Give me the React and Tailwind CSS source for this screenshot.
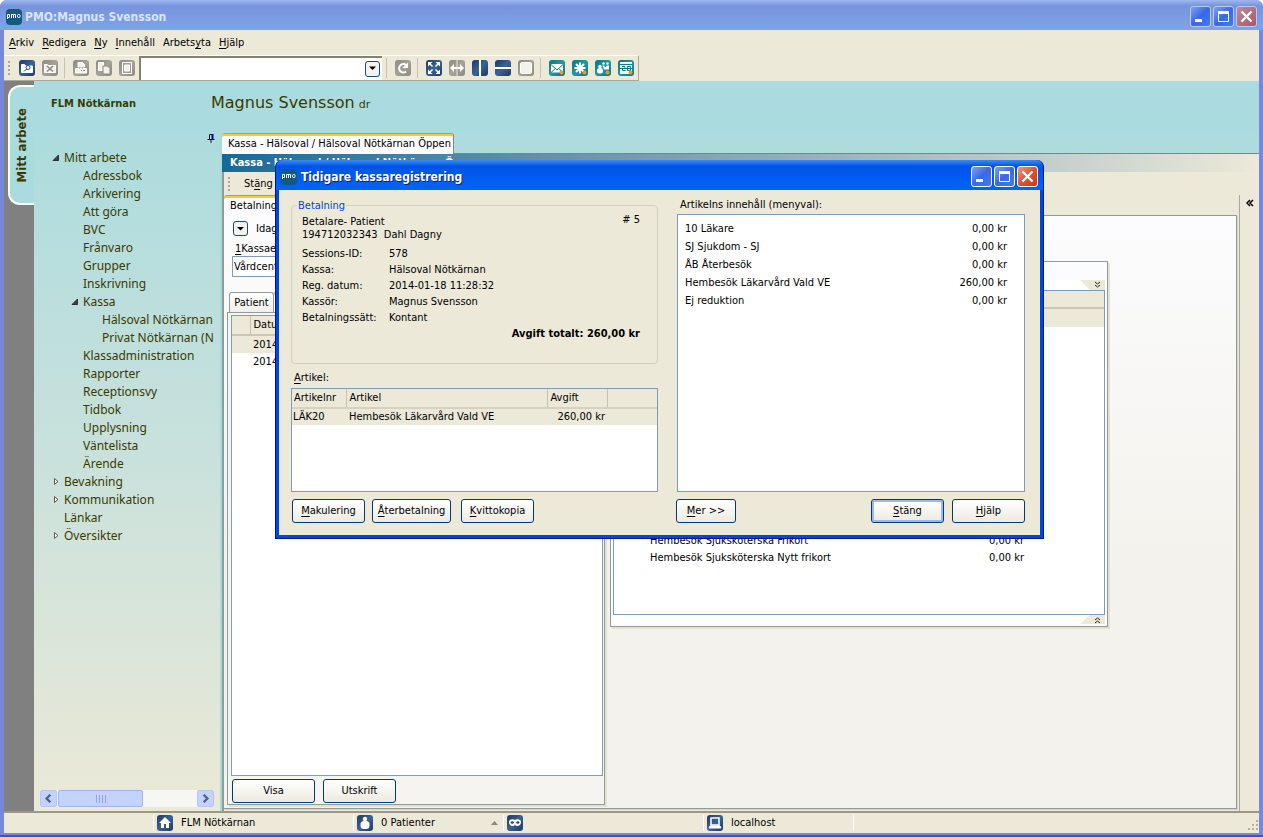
import React from 'react';
import clsx from 'clsx';

const menuItems = [
    ['', 'A', 'rkiv'],
    ['', 'R', 'edigera'],
    ['', 'N', 'y'],
    ['', 'I', 'nnehåll'],
    ['Arbets', 'y', 'ta'],
    ['', 'H', 'jälp']
];

const treeItems = [
    { label: 'Mitt arbete', level: 0, state: 'open' },
    { label: 'Adressbok', level: 1 },
    { label: 'Arkivering', level: 1 },
    { label: 'Att göra', level: 1 },
    { label: 'BVC', level: 1 },
    { label: 'Frånvaro', level: 1 },
    { label: 'Grupper', level: 1 },
    { label: 'Inskrivning', level: 1 },
    { label: 'Kassa', level: 1, state: 'open' },
    { label: 'Hälsoval Nötkärnan', level: 2 },
    { label: 'Privat Nötkärnan (N', level: 2 },
    { label: 'Klassadministration', level: 1 },
    { label: 'Rapporter', level: 1 },
    { label: 'Receptionsvy', level: 1 },
    { label: 'Tidbok', level: 1 },
    { label: 'Upplysning', level: 1 },
    { label: 'Väntelista', level: 1 },
    { label: 'Ärende', level: 1 },
    { label: 'Bevakning', level: 0, state: 'closed' },
    { label: 'Kommunikation', level: 0, state: 'closed' },
    { label: 'Länkar', level: 0 },
    { label: 'Översikter', level: 0, state: 'closed' }
];

const paymentDetails = [
    ['Sessions-ID:', '578'],
    ['Kassa:', 'Hälsoval Nötkärnan'],
    ['Reg. datum:', '2014-01-18 11:28:32'],
    ['Kassör:', 'Magnus Svensson'],
    ['Betalningssätt:', 'Kontant']
];

const articleContents = [
    ['10 Läkare', '0,00 kr'],
    ['SJ Sjukdom - SJ', '0,00 kr'],
    ['ÅB Återbesök', '0,00 kr'],
    ['Hembesök Läkarvård Vald VE', '260,00 kr'],
    ['Ej reduktion', '0,00 kr']
];

const tileColors = {
    navy: 'from-[#1f3864] via-[#3a6496] to-[#1f3864]',
    gray: 'from-[#8c8a80] via-[#a5a399] to-[#8c8a80]',
    teal: 'from-[#0c7480] via-[#1f9aa0] to-[#0c7480]'
};

const Tile = ({ color = 'navy', children }) => (
    <span className={clsx('block size-4 shrink-0 rounded-[3px] bg-linear-to-br', tileColors[color])}>
        <svg viewBox="0 0 16 16" width="16" height="16" fill="none" stroke="#fff" aria-hidden="true">
            {children}
        </svg>
    </span>
);

const ToolButton = ({ label, color, children }) => (
    <button type="button" aria-label={label} className="block pr-1 pl-[3px]">
        <Tile color={color}>{children}</Tile>
    </button>
);

const Separator = () => <span className="mr-[5px] ml-[2px] h-5 w-px bg-[#c5c2b2]" />;

const Grip = () => (
    <svg width="3" height="16" viewBox="0 0 3 16" fill="#a8a694" aria-hidden="true">
        <path d="M0 1h2v2H0zM0 5h2v2H0zM0 9h2v2H0zM0 13h2v2H0z" />
    </svg>
);

const Key = ({ children }) => <span className="underline underline-offset-2">{children}</span>;

const PmoLogo = () => (
    <svg width="16" height="16" viewBox="0 0 16 16" className="shrink-0" aria-hidden="true">
        <rect width="16" height="16" rx="4" fill="#145a80" />
        <g fill="none" stroke="#fff">
            <path d="M1.500 10V5.500h2v3h-2M5.500 9V5.500h4V9M7.500 5.500V9" />
            <rect x="11.500" y="5.500" width="2.500" height="3" rx="1" />
        </g>
    </svg>
);

const CaptionButton = ({ kind, dim }) => (
    <button
        type="button"
        aria-label={kind}
        className={clsx(
            'flex size-[21px] items-center justify-center rounded-[3px] border bg-linear-to-br',
            dim ? 'border-[#b9c8f4]' : 'border-white',
            kind !== 'Stäng fönster' && 'from-[#7f9ff2] via-[#3a68e4] to-[#3f7cf0]',
            kind === 'Stäng fönster' && (dim ? 'from-[#c08a96] to-[#a4586c]' : 'from-[#f0977c] via-[#e2502c] to-[#c83c12]')
        )}
    >
        <svg width="19" height="19" viewBox="0 0 19 19" fill="none" stroke="#fff" aria-hidden="true">
            {kind === 'Minimera' && <path d="M4 13.500h7" strokeWidth="3" />}
            {kind === 'Maximera' && (
                <>
                    <path d="M4 5.500h11" strokeWidth="3" />
                    <path d="M4.500 6v8.500h10V6" />
                </>
            )}
            {kind === 'Stäng fönster' && <path d="M4.500 4.500l10 10M14.500 4.500l-10 10" strokeWidth="2.400" />}
        </svg>
    </button>
);

const CaptionButtons = ({ dim }) => (
    <div className="ml-auto flex gap-[2px]">
        <CaptionButton kind="Minimera" dim={dim} />
        <CaptionButton kind="Maximera" dim={dim} />
        <CaptionButton kind="Stäng fönster" dim={dim} />
    </div>
);

const XpButton = ({ className, active, children }) => (
    <button
        type="button"
        className={clsx(
            'h-6 rounded-[3px] border border-[#003c74] bg-linear-to-b from-white to-[#eceae0]',
            active && 'shadow-[inset_0_0_0_2px_#9cb8ee]',
            className
        )}
    >
        {children}
    </button>
);

const DropGlyph = () => (
    <svg width="15" height="15" viewBox="0 0 15 15" className="shrink-0" aria-hidden="true">
        <rect x="0.500" y="0.500" width="14" height="14" rx="2.500" fill="#f4f3ee" stroke="#1c4a7c" />
        <path d="M4 6h7L7.500 9.500z" fill="#000" />
    </svg>
);

const TreeArrow = ({ state }) => (
    <svg width="8" height="8" viewBox="0 0 8 8" className="shrink-0" aria-hidden="true">
        {state === 'open' && <path d="M6.500 1v5.500H1z" fill="#404040" stroke="#303030" />}
        {state === 'closed' && <path d="M2.500 0.500v6l3.500-3z" fill="#fff" stroke="#606050" />}
    </svg>
);

const MainToolbar = () => (
    <div className="flex h-[26px] w-fit items-center border-t border-r border-b border-t-white border-r-[#aca899] border-b-[#aca899] pl-1">
        <Grip />
        <span className="w-[5px]" />
        <ToolButton label="Sök patient">
            <path d="M2.500 12.500v-8h3l1 1.500h7v6.500z" fill="#fff" />
            <circle cx="9" cy="7.500" r="2" stroke="#24467c" />
            <path d="M7.500 9l-2.500 2.500" stroke="#24467c" />
        </ToolButton>
        <ToolButton label="Stäng patient" color="gray">
            <path d="M2.500 12.500v-8h3l1 1h7v7z" fill="#f2f1ec" />
            <path d="M5 6l6 5.500M11 6l-6 5.500" stroke="#8c8a80" strokeWidth="1.500" />
        </ToolButton>
        <Separator />
        <ToolButton label="Skriv ut" color="gray">
            <path d="M5 7V2.500h4.500l2 2V7z" fill="#f2f1ec" />
            <path d="M2.500 8.500h11v4.500h-11z" fill="#f2f1ec" />
            <path d="M6 8h1M9 8h1M8 10.500h1M10 10.500h2" stroke="#8c8a80" />
        </ToolButton>
        <ToolButton label="Kopiera" color="gray">
            <path d="M2.500 2.500h5v8h-5z" fill="#f2f1ec" />
            <path d="M7 6h4.500l2.500 2.500v5.500H7z" fill="#f2f1ec" stroke="#8c8a80" />
        </ToolButton>
        <ToolButton label="Dokument" color="gray">
            <path d="M3.500 2.500h9v11h-9z" />
            <path d="M5.500 5h5v6h-5z" fill="#f2f1ec" />
        </ToolButton>
        <label className="mr-[2px] flex h-6 w-[243px] items-center border-t-2 border-l-2 border-[#85836f] bg-white pr-[2px]">
            <input type="text" aria-label="Patient" className="min-w-0 flex-1 bg-transparent px-1 outline-none" />
            <svg width="15" height="16" viewBox="0 0 15 16" aria-hidden="true">
                <rect x="0.500" y="0.500" width="14" height="15" rx="2.500" fill="#f4f3ee" stroke="#1c4a7c" />
                <path d="M4 5.500h7L7.500 9z" fill="#000" />
            </svg>
        </label>
        <Separator />
        <ToolButton label="Uppdatera" color="gray">
            <path d="M11 11.500A4.200 4.200 0 1 1 11 5" strokeWidth="2" />
            <path d="M13 2.500v5.500H7.500z" fill="#fff" stroke="none" />
        </ToolButton>
        <Separator />
        <ToolButton label="Helskärm">
            <path d="M3 3l3.500 3.500M13 3L9.500 6.500M3 13l3.500-3.500M13 13L9.500 9.500" strokeWidth="1.500" />
            <path d="M2 6.500V2h4.500zM9.500 2H14v4.500zM14 9.500V14H9.500zM6.500 14H2V9.500z" fill="#fff" stroke="none" />
        </ToolButton>
        <ToolButton label="Bredd" color="gray">
            <path d="M3 8h10" strokeWidth="2" />
            <path d="M1 8l4-4v8zM15 8l-4-4v8z" fill="#fff" stroke="none" />
            <path d="M8 0v16" stroke="#ece9d8" />
        </ToolButton>
        <ToolButton label="Dela lodrätt">
            <path d="M8 0v16" strokeWidth="2" />
        </ToolButton>
        <ToolButton label="Dela vågrätt">
            <path d="M0 8h16" strokeWidth="2" />
        </ToolButton>
        <ToolButton label="En ruta" color="gray">
            <rect x="2.500" y="2.500" width="11" height="11" rx="1.500" fill="#f2f1ec" />
        </ToolButton>
        <Separator />
        <ToolButton label="Nytt meddelande" color="teal">
            <path d="M2 4h12v8.500H2z" fill="#fff" stroke="none" />
            <path d="M2 4.500L8 10l6-5.500M2 12.500L6.500 8.500M14 12.500L9.500 8.500" stroke="#128088" />
            <circle cx="12.500" cy="12.500" r="2" fill="#f7941d" stroke="none" />
        </ToolButton>
        <ToolButton label="Ny händelse" color="teal">
            <path d="M8 2.500v11M2.500 8h11M4 4l8 8M12 4l-8 8" strokeWidth="2" />
            <circle cx="12.500" cy="12.500" r="2" fill="#f7941d" stroke="none" />
        </ToolButton>
        <ToolButton label="Ny grupp" color="teal">
            <g fill="#fff" stroke="none">
                <circle cx="5" cy="6.500" r="1.800" />
                <rect x="2" y="8" width="6" height="5.500" rx="2.500" />
                <circle cx="8.500" cy="3.500" r="1.200" />
                <circle cx="12.500" cy="3.500" r="1.200" />
                <path d="M7.500 5.500l1.500 0 1.500 2 1.500-2h2v4H9z" />
            </g>
            <circle cx="12.500" cy="12.500" r="2" fill="#f7941d" stroke="none" />
        </ToolButton>
        <ToolButton label="Ny bokning" color="teal">
            <path d="M2.500 2.500h11v11h-11z" fill="#fff" />
            <path d="M2 4.500h12M4 6.500h3v2H4.500v2h3M9.500 6.500h3v4h-3zM2 8.500h12" stroke="#128088" />
            <circle cx="12.500" cy="12.500" r="2" fill="#f7941d" stroke="none" />
        </ToolButton>
    </div>
);

const Sidebar = () => (
    <nav className="flex w-[188px] shrink-0 flex-col border-r-2 border-[#a8dadb]">
        <div className="flex h-4 justify-end pr-[5px]">
            <svg width="8" height="10" viewBox="0 0 8 10" fill="none" stroke="#101030" aria-hidden="true">
                <path d="M2.500 6V1.500h3V6M0.500 6.500h7M4 6.500V10" />
                <path d="M5.500 1v5" stroke="#00008c" strokeWidth="2" />
            </svg>
        </div>
        <ul className="mr-[5px] overflow-hidden font-['Noto_Sans',sans-serif] text-[12px] leading-[18px] text-[#3a3a00]">
            {treeItems.map((item) => (
                <li key={item.label}>
                    <a
                        href="#"
                        className={clsx(
                            'flex h-[18px] items-center gap-1 whitespace-nowrap',
                            item.level === 0 && 'pl-[18px]',
                            item.level === 1 && 'pl-[37px]',
                            item.level === 2 && 'pl-[56px]'
                        )}
                    >
                        <TreeArrow state={item.state} />
                        {item.label}
                    </a>
                </li>
            ))}
        </ul>
        <div className="mt-auto mr-[6px] mb-1 ml-[6px] flex h-[17px] gap-px bg-[#f6f6f2]">
            <ScrollButton label="Rulla åt vänster" d="M10 4L6 8l4 4" />
            <div className="flex w-[85px] items-center justify-center gap-[2px] rounded-[2px] border border-[#9db5ec] bg-[#c3d3fd]">
                {[0, 1, 2, 3].map((n) => (
                    <span key={n} className="h-2 w-px bg-[#8ca6ea]" />
                ))}
            </div>
            <span className="flex-1" />
            <ScrollButton label="Rulla åt höger" d="M6 4l4 4-4 4" />
        </div>
    </nav>
);

const ScrollButton = ({ label, d }) => (
    <button type="button" aria-label={label} className="w-[17px] rounded-[2px] border border-[#b4c6f4] bg-[#c3d3fd]">
        <svg width="15" height="15" viewBox="0 0 16 16" fill="none" stroke="#4d6185" strokeWidth="2.500" aria-hidden="true">
            <path d={d} />
        </svg>
    </button>
);

const HistoryPanel = () => (
    <section className="flex w-[381px] shrink-0 flex-col pt-[6px] pb-[3px] pl-[3px]">
        <div className="flex h-[15px] items-center gap-2 pl-[6px]">
            <button type="button" aria-label="Välj period">
                <DropGlyph />
            </button>
            <span>Idag</span>
        </div>
        <label htmlFor="unit" className="mt-[6px] pl-2 leading-[14px]">
            <Key>1</Key>Kassaenhet
        </label>
        <select id="unit" className="ml-[5px] h-[21px] w-[200px] appearance-none border border-[#7f9db9] bg-white px-px">
            <option>Vårdcentral</option>
        </select>
        <div className="mt-[14px] flex h-[21px] items-end pl-[2px]">
            <button type="button" className="h-5 w-[45px] rounded-t-[3px] border border-b-0 border-[#919b9c] bg-linear-to-b from-white to-[#f0efe8]">
                Patient
            </button>
            <button
                type="button"
                aria-label="Alla"
                className="h-[21px] w-[60px] rounded-t-[3px] border-t border-r border-t-[#e68b2c] border-r-[#919b9c] bg-white shadow-[inset_0_2px_#ffc73c]"
            />
        </div>
        <div className="flex flex-1 flex-col border border-[#919b9c] bg-[#f5f4f0] pt-[2px] pr-px pb-px pl-[3px] shadow-[2px_2px_0_#e4e1d2]">
            <div className="flex-1 border border-[#7f9db9] bg-white">
                <table className="w-full border-collapse text-left">
                    <thead>
                        <tr className="h-[19px] border-b-2 border-[#cbc7b8] bg-[#ece9d8]">
                            <th className="w-[18px] p-0" />
                            <th className="border-l border-[#c5c2b2] p-0 pl-[3px] font-normal">Datum</th>
                        </tr>
                    </thead>
                    <tbody>
                        <tr className="h-[18px] bg-[#ece9d8]">
                            <td className="p-0" />
                            <td className="p-0 pl-[3px]">2014-01-18</td>
                        </tr>
                        <tr className="h-[18px]">
                            <td className="p-0" />
                            <td className="p-0 pl-[3px]">2014-01-18</td>
                        </tr>
                    </tbody>
                </table>
            </div>
            <div className="flex gap-2 pt-[3px] pl-px">
                <XpButton className="w-[83px]">Visa</XpButton>
                <XpButton className="w-[73px]">Utskrift</XpButton>
            </div>
        </div>
    </section>
);

const ArticlePanel = () => (
    <section className="mt-[45px] ml-[5px] flex h-[366px] w-[498px] shrink-0 flex-col border border-[#919b9c] bg-[#fcfcfe] p-[2px] shadow-[2px_2px_0_#e4e1d2]">
        <div className="mt-4 flex h-[10px] justify-end bg-white">
            <Fold d="M9 1l2.500 2L14 1M9 4l2.500 2L14 4" />
        </div>
        <div className="flex flex-1 flex-col border border-[#7f9db9] bg-white">
            <div className="h-[18px] border-b-2 border-[#cbc7b8] bg-[#ece9d8]" />
            <div className="h-[18px] bg-[#ece9d8]" />
            <table className="mt-auto mb-12 w-full">
                <tbody>
                    <tr className="h-[17px]">
                        <td className="p-0 pl-9">Hembesök Sjuksköterska Frikort</td>
                        <td className="p-0 pr-20 text-right">0,00 kr</td>
                    </tr>
                    <tr className="h-[17px]">
                        <td className="p-0 pl-9">Hembesök Sjuksköterska Nytt frikort</td>
                        <td className="p-0 pr-20 text-right">0,00 kr</td>
                    </tr>
                </tbody>
            </table>
        </div>
        <div className="flex h-[9px] justify-end bg-white">
            <Fold d="M9 4l2.500-2L14 4M9 7l2.500-2L14 7" up />
        </div>
    </section>
);

const Fold = ({ d, up }) => (
    <svg width="25" height="10" viewBox="0 0 25 10" aria-hidden="true">
        <path d={up ? 'M10 0h15v9H0z' : 'M0 0h25v10H10z'} fill="#ece9d8" />
        <path d={d} transform="translate(6 1)" fill="none" stroke="#202020" />
    </svg>
);

const Workspace = () => (
    <main className="flex min-w-0 flex-1 flex-col">
        <div className="flex h-[21px]">
            <button
                type="button"
                className="w-[232px] rounded-t-[3px] border-t border-r border-t-[#e68b2c] border-r-[#8a8a80] bg-[#fcfcfe] pl-[6px] text-left whitespace-nowrap shadow-[inset_0_2px_#ffc73c]"
            >
                Kassa - Hälsoval / Hälsoval Nötkärnan Öppen
            </button>
            <span className="flex-1 border-b border-[#7c8684]" />
        </div>
        <h2 className="h-[18px] truncate bg-linear-to-r from-[#156a98] to-[#ece9d8] pl-2 font-bold leading-[18px] text-white">
            Kassa - Hälsoval / Hälsoval Nötkärnan Öppen
        </h2>
        <div className="flex flex-1 flex-col border-l-2 border-l-[#919b9c] bg-[#ece9d8]">
            <div className="flex h-[23px] items-center gap-[13px] pl-1">
                <Grip />
                <button type="button">
                    St<Key>ä</Key>ng
                </button>
            </div>
            <div className="flex flex-1">
                <div className="flex flex-1 flex-col pb-[2px]">
                    <button
                        type="button"
                        className="h-5 w-[60px] rounded-t-[3px] border-t border-[#e68b2c] bg-[#fcfcfe] pl-[6px] text-left shadow-[inset_0_2px_#ffc73c]"
                    >
                        Betalning
                    </button>
                    <div className="flex flex-1 border-r border-b border-[#919b9c] bg-linear-to-b from-[#fcfcfe] to-[#f3f2ec] to-60% shadow-[1px_1px_0_#d8d5c6]">
                        <HistoryPanel />
                        <div className="flex-1 border-t border-[#919b9c]">
                            <ArticlePanel />
                        </div>
                    </div>
                </div>
                <div className="ml-[2px] w-5 border-l border-[#aca899] pt-1 pl-[6px]">
                    <button type="button" aria-label="Visa sidopanel" className="block">
                        <svg width="8" height="8" viewBox="0 0 8 8" fill="none" stroke="#000" strokeWidth="1.500" aria-hidden="true">
                            <path d="M4 1L1 4l3 3M7 1L4 4l3 3" />
                        </svg>
                    </button>
                </div>
            </div>
        </div>
    </main>
);

const StatusBar = () => (
    <footer className="flex h-[22px] shrink-0 items-center border-t-2 border-[#9b9885] bg-[#ece9d8]">
        <span className="w-[149px]" />
        <div className="flex w-[200px] items-center gap-2 border-l border-white pl-[3px]">
            <Tile>
                <path d="M8 2L2 8h2v5h3V9h2v4h3V8h2z" fill="#fff" stroke="none" />
            </Tile>
            FLM Nötkärnan
        </div>
        <div className="flex w-[150px] items-center gap-2 border-l border-white pl-[3px]">
            <Tile>
                <circle cx="8" cy="4" r="2.200" fill="#fff" stroke="none" />
                <rect x="3.500" y="6" width="9" height="8" rx="3.500" fill="#fff" stroke="none" />
            </Tile>
            0 Patienter
            <svg width="7" height="4" viewBox="0 0 7 4" className="mr-[5px] ml-auto" aria-hidden="true">
                <path d="M3.500 0L7 4H0z" fill="#8a8774" />
            </svg>
        </div>
        <div className="flex w-[200px] items-center border-l border-white pl-[3px]">
            <Tile>
                <path d="M2 7c0-3 4-3.500 6-2 2-1.500 6-1 6 2 0 4-4.500 5.500-6 2.500C6.500 12.500 2 11 2 7z" fill="#fff" stroke="none" />
                <ellipse cx="5.200" cy="7.500" rx="1.600" ry="1.300" fill="#24467c" stroke="none" />
                <ellipse cx="10.800" cy="7.500" rx="1.600" ry="1.300" fill="#24467c" stroke="none" />
            </Tile>
        </div>
        <div className="flex w-[150px] items-center gap-2 border-l border-white pl-[3px]">
            <Tile>
                <path d="M4 3h8v7H4z" strokeWidth="1.500" />
                <path d="M3 11h10l1 2H2z" fill="#fff" />
            </Tile>
            localhost
        </div>
        <div className="flex h-4 flex-1 items-end justify-end border-l border-white">
            <svg width="11" height="11" viewBox="0 0 11 11" fill="#b4b19e" aria-hidden="true">
                <path d="M8 0h2v2H8zM4 4h2v2H4zM8 4h2v2H8zM0 8h2v2H0zM4 8h2v2H4zM8 8h2v2H8z" />
            </svg>
        </div>
    </footer>
);

const RegistrationDialog = () => (
    <div
        role="dialog"
        aria-labelledby="dialog-title"
        className="absolute top-[160px] left-[275px] w-[769px] rounded-t-[7px] border-r border-b border-l border-[#00138c] bg-[#0046e0] px-[3px] pb-[3px]"
    >
        <header className="-mx-[3px] flex h-[30px] items-center gap-1 rounded-t-[7px] bg-linear-to-b from-[#3c8cf4] via-[#0054e6] via-20% to-[#0064fa] pt-[3px] pr-[5px] pl-[5px]">
            <PmoLogo />
            <h2 id="dialog-title" className="text-[12px] font-bold text-white [text-shadow:1px_1px_#0a1e78]">
                Tidigare kassaregistrering
            </h2>
            <CaptionButtons />
        </header>
        <div className="bg-[#ece9d8] pr-[15px] pb-3 pl-3">
            <div className="flex gap-[19px]">
                <div className="w-[367px]">
                    <fieldset className="relative mt-[15px] h-[159px] rounded-[4px] border border-[#d0d0bf] px-[10px]">
                        <legend className="absolute -top-[7px] left-[5px] bg-[#ece9d8] px-px leading-[14px] text-[#0046d5]">Betalning</legend>
                        <div className="flex justify-between pt-[9px] pr-[7px]">
                            <p className="leading-[13px]">
                                Betalare- Patient
                                <br />
                                194712032343&nbsp; Dahl Dagny
                            </p>
                            <span className="leading-[10px]"># 5</span>
                        </div>
                        <dl className="mt-[5px] grid grid-cols-[87px_1fr] leading-4">
                            {paymentDetails.map(([label, value]) => (
                                <React.Fragment key={label}>
                                    <dt>{label}</dt>
                                    <dd>{value}</dd>
                                </React.Fragment>
                            ))}
                        </dl>
                        <p className="pr-[7px] text-right font-bold leading-4">Avgift totalt: 260,00 kr</p>
                    </fieldset>
                    <h3 className="mt-[7px] mb-[3px] pl-[3px] leading-[14px]">
                        <Key>A</Key>rtikel:
                    </h3>
                    <div className="h-[104px] border border-[#7f9db9] bg-white">
                        <table className="w-full table-fixed text-left">
                            <thead>
                                <tr className="h-[19px] border-b-2 border-[#d6d2c2] bg-[#ece9d8]">
                                    <th className="w-[54px] border-r border-[#c5c2b2] p-0 pl-[2px] font-normal">Artikelnr</th>
                                    <th className="w-[201px] border-r border-[#c5c2b2] p-0 pl-[3px] font-normal">Artikel</th>
                                    <th className="w-[60px] border-r border-[#c5c2b2] p-0 pl-[3px] font-normal">Avgift</th>
                                    <th className="p-0" />
                                </tr>
                            </thead>
                            <tbody>
                                <tr className="h-[17px] bg-[#ece9d8]">
                                    <td className="p-0 pl-px">LÄK20</td>
                                    <td className="p-0 pl-[3px]">Hembesök Läkarvård Vald VE</td>
                                    <td className="p-0 pr-[2px] text-right">260,00 kr</td>
                                    <td className="p-0" />
                                </tr>
                            </tbody>
                        </table>
                    </div>
                </div>
                <div className="flex flex-1 flex-col">
                    <h3 className="mt-2 mb-[2px] pl-[3px] leading-[14px]">Artikelns innehåll (menyval):</h3>
                    <div className="flex-1 border border-[#7f9db9] bg-white pt-[5px]">
                        <table className="w-full">
                            <tbody>
                                {articleContents.map(([name, price]) => (
                                    <tr key={name} className="h-[18px]">
                                        <td className="p-0 pl-[7px]">{name}</td>
                                        <td className="p-0 pr-[17px] text-right">{price}</td>
                                    </tr>
                                ))}
                            </tbody>
                        </table>
                    </div>
                </div>
            </div>
            <div className="mt-[7px] flex pl-px">
                <XpButton className="w-[73px]">
                    <Key>M</Key>akulering
                </XpButton>
                <XpButton className="ml-[7px] w-[79px]">
                    <Key>Å</Key>terbetalning
                </XpButton>
                <XpButton className="ml-[10px] w-[73px]">
                    <Key>K</Key>vittokopia
                </XpButton>
                <XpButton className="ml-[142px] w-[60px]">
                    <Key>M</Key>er &gt;&gt;
                </XpButton>
                <XpButton className="ml-auto w-[73px]" active>
                    <Key>S</Key>täng
                </XpButton>
                <XpButton className="ml-2 w-[73px]">
                    <Key>H</Key>jälp
                </XpButton>
            </div>
        </div>
    </div>
);

const App = () => (
    <div className="relative flex h-screen flex-col overflow-hidden rounded-t-[7px] border-b-2 border-[#4a50b4] bg-[#7788dc] px-1 pb-[2px] font-['DejaVu_Sans_Condensed',Tahoma,sans-serif] text-[11px] leading-[14px] text-black">
        <header className="-mx-1 flex h-[30px] shrink-0 items-center gap-[3px] bg-linear-to-b from-[#9db8ee] via-[#7893dd] via-20% to-[#7ea4e8] pt-[3px] pr-[6px] pl-[6px]">
            <PmoLogo />
            <h1 className="text-[12px] font-bold text-[#dbe4fa]">PMO:Magnus Svensson</h1>
            <CaptionButtons dim />
        </header>
        <div className="shrink-0 bg-[#ece9d8]">
            <nav className="flex h-[25px] items-center gap-2 pt-px pl-[5px]">
                {menuItems.map(([before, key, after]) => (
                    <button key={after} type="button">
                        {before}
                        <Key>{key}</Key>
                        {after}
                    </button>
                ))}
            </nav>
            <MainToolbar />
        </div>
        <div className="flex min-h-0 flex-1">
            <aside className="w-[30px] shrink-0 bg-[#808080] pt-1 pl-1">
                <button
                    type="button"
                    className="flex h-[120px] w-[26px] items-center justify-center rounded-l-[12px] border-y-2 border-l-2 border-white bg-[#aadcdf] text-[13px] font-bold text-[#3a3a00]"
                >
                    <span className="rotate-180 whitespace-nowrap [writing-mode:vertical-rl]">Mitt arbete</span>
                </button>
            </aside>
            <div className="flex min-w-0 flex-1 flex-col bg-linear-to-b from-[#a8dbde] via-[#c8e1dc] to-[#ebe9d7]">
                <header className="flex h-[52px] shrink-0 bg-[#aadcdf] pl-[17px] text-[#3a3a00]">
                    <p className="w-40 pt-4 font-bold">FLM Nötkärnan</p>
                    <p className="flex items-baseline gap-1 pt-3 font-['DejaVu_Sans',Verdana,sans-serif] text-[16px] leading-5">
                        Magnus Svensson <span className="text-[11px]">dr</span>
                    </p>
                </header>
                <div className="flex min-h-0 flex-1">
                    <Sidebar />
                    <Workspace />
                </div>
            </div>
        </div>
        <StatusBar />
        <RegistrationDialog />
    </div>
);

export default App;
